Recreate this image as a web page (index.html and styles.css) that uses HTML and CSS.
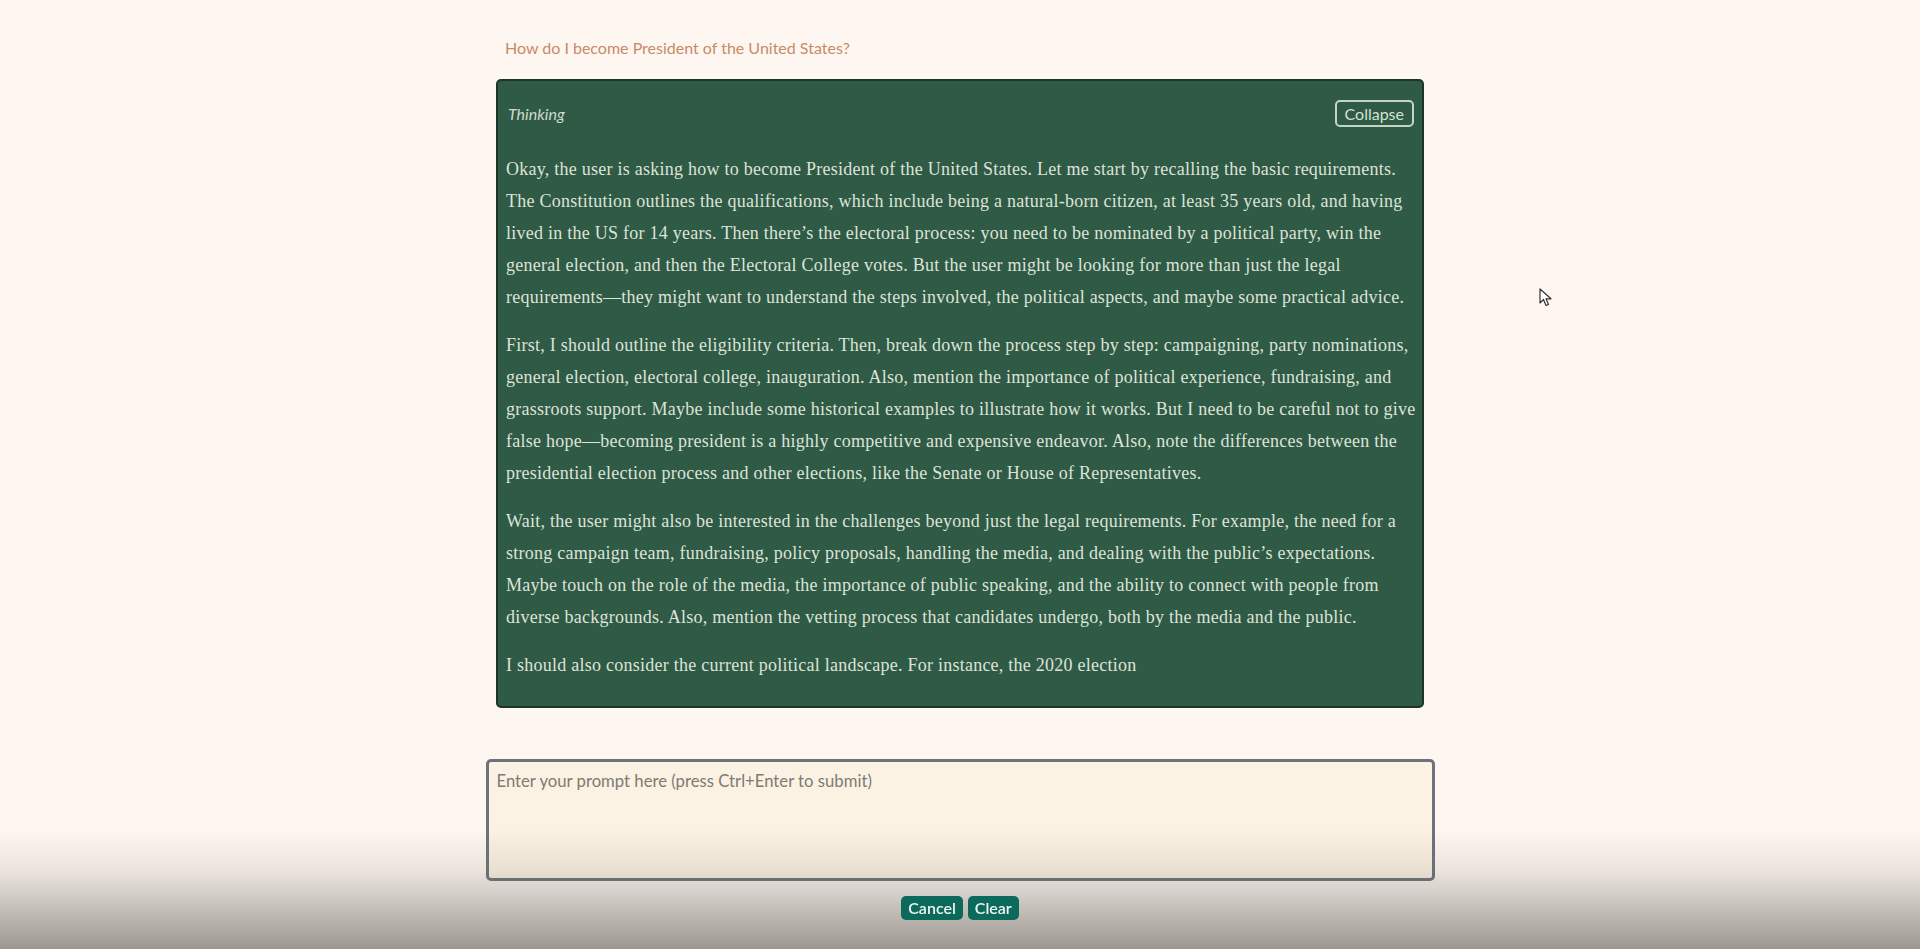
FILE: index.html
```html
<!DOCTYPE html>
<html lang="en">
<head>
<meta charset="utf-8">
<title>Chat</title>
<link rel="stylesheet" href="styles.css">
</head>
<body>
<main class="page">
  <section class="chat">
    <div class="question">How do I become President of the United States?</div>
    <div class="thinking">
      <div class="thinking-head">
        <span class="thinking-label">Thinking</span>
        <button class="collapse">Collapse</button>
      </div>
      <p>Okay, the user is asking how to become President of the United States. Let me start by recalling the basic requirements.<br>The Constitution outlines the qualifications, which include being a natural-born citizen, at least 35 years old, and having<br>lived in the US for 14 years. Then there’s the electoral process: you need to be nominated by a political party, win the<br>general election, and then the Electoral College votes. But the user might be looking for more than just the legal<br>requirements—they might want to understand the steps involved, the political aspects, and maybe some practical advice.</p>
      <p>First, I should outline the eligibility criteria. Then, break down the process step by step: campaigning, party nominations,<br>general election, electoral college, inauguration. Also, mention the importance of political experience, fundraising, and<br>grassroots support. Maybe include some historical examples to illustrate how it works. But I need to be careful not to give<br>false hope—becoming president is a highly competitive and expensive endeavor. Also, note the differences between the<br>presidential election process and other elections, like the Senate or House of Representatives.</p>
      <p>Wait, the user might also be interested in the challenges beyond just the legal requirements. For example, the need for a<br>strong campaign team, fundraising, policy proposals, handling the media, and dealing with the public’s expectations.<br>Maybe touch on the role of the media, the importance of public speaking, and the ability to connect with people from<br>diverse backgrounds. Also, mention the vetting process that candidates undergo, both by the media and the public.</p>
      <p>I should also consider the current political landscape. For instance, the 2020 election</p>
    </div>
  </section>
  <section class="composer">
    <textarea class="prompt" placeholder="Enter your prompt here (press Ctrl+Enter to submit)"></textarea>
    <div class="actions">
      <button class="btn">Cancel</button>
      <button class="btn">Clear</button>
    </div>
  </section>
</main>
<div class="vignette"></div>
<svg class="cursor" width="14" height="20" viewBox="0 0 14 20"><path d="M1 1 L1 15 L4.5 11.5 L7 17.5 L9.5 16.5 L7 10.8 L12 10.8 Z" fill="#fff" stroke="#333" stroke-width="1.2" stroke-linejoin="round"/></svg>
</body>
</html>
```
FILE: styles.css
```css
html, body {
  margin: 0;
  padding: 0;
  height: 100%;
}
body {
  background: #fef7f1;
  font-family: Lato, "Noto Sans", sans-serif;
  overflow: hidden;
}
.page {
  display: flex;
  flex-direction: column;
  align-items: center;
  padding-top: 38px;
}
.chat {
  width: 928px;
}
.question {
  color: #c98a66;
  font-size: 16px;
  line-height: 20px;
  padding-left: 9px;
  margin-bottom: 21px;
}
.thinking {
  background: #2f5a45;
  border: 2px solid #1d3527;
  border-radius: 5px;
  padding: 19px 8px 9px 8px;
  color: #dde3d8;
}
.thinking-head {
  display: flex;
  justify-content: space-between;
  align-items: center;
  margin-bottom: 26px;
}
.thinking-label {
  font-style: italic;
  font-size: 16px;
  color: #cddccd;
  padding-left: 2px;
}
.collapse {
  font-family: Lato, "Noto Sans", sans-serif;
  font-size: 16px;
  background: transparent;
  color: #d3e1d3;
  border: 2px solid #c3d6c6;
  border-radius: 5px;
  height: 27px;
  padding: 0 8px;
  line-height: 21px;
  cursor: pointer;
}
.thinking p {
  font-family: "Liberation Serif", serif;
  font-size: 18px;
  letter-spacing: 0.25px;
  line-height: 32px;
  margin: 0 0 16px 0;
  white-space: nowrap;
}
.composer {
  width: 949px;
  margin-top: 51px;
  display: flex;
  flex-direction: column;
  align-items: stretch;
}
.prompt {
  box-sizing: border-box;
  height: 122px;
  width: 100%;
  border: 3px solid #6e7379;
  border-radius: 5px;
  background: #fcf2e3;
  padding: 9px 8px;
  font-family: Lato, "Noto Sans", sans-serif;
  font-size: 16.7px;
  line-height: 20px;
  resize: none;
  outline: none;
}
.prompt::placeholder {
  color: #7f7a73;
}
.actions {
  position: relative;
  z-index: 2;
  display: flex;
  justify-content: center;
  gap: 5px;
  margin-top: 15px;
}
.btn {
  font-family: Lato, "Noto Sans", sans-serif;
  font-size: 16px;
  font-weight: 600;
  background: #0b6a5c;
  color: #eef5f2;
  border: none;
  border-radius: 5px;
  height: 24px;
  padding: 0 7px;
  line-height: 24px;
  cursor: pointer;
}
.vignette {
  position: fixed;
  z-index: 1;
  left: 0;
  right: 0;
  bottom: 0;
  height: 120px;
  pointer-events: none;
  background: linear-gradient(to bottom, rgba(95, 90, 85, 0) 0%, rgba(95, 90, 85, 0.12) 35%, rgba(95, 90, 85, 0.38) 70%, rgba(95, 90, 85, 0.62) 100%);
}
.cursor {
  position: fixed;
  left: 1539px;
  top: 288px;
}
```
